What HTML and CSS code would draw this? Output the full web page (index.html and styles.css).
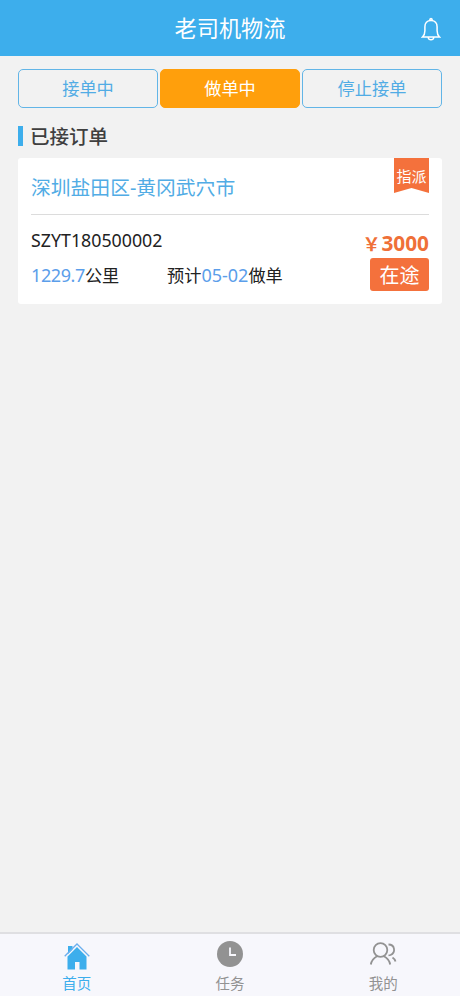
FILE: index.html
```html
<!DOCTYPE html>
<html lang="zh-CN">
<head>
<meta charset="utf-8">
<title>老司机物流</title>
<link rel="stylesheet" href="styles.css">
</head>
<body>
<header class="topbar">
  <h1 class="topbar-title">老司机物流</h1>
  <svg class="bell" viewBox="0 0 20 24"><path d="M1.500 20c1.800-1.600 2.400-3 2.400-6.200V9.800c0-3.500 2.100-6.300 6.100-6.300s6.100 2.800 6.100 6.300v4c0 3.200.6 4.600 2.400 6.200zM8.700 3.500c0-2.600 2.600-2.600 2.600 0M7.200 20.500c.4 3 5.200 3 5.600 0"/></svg>
</header>
<main class="content">
  <nav class="tabs">
    <button class="tab">接单中</button>
    <button class="tab tab-active">做单中</button>
    <button class="tab">停止接单</button>
  </nav>
  <h2 class="section-title"><span>已接订单</span></h2>
  <article class="card">
    <div class="card-head">
      <span class="route">深圳盐田区-黄冈武穴市</span>
      <span class="ribbon">指派</span>
    </div>
    <div class="card-body">
      <div class="details">
        <div class="order-no"><span>SZYT180500002</span></div>
        <div class="facts">
          <span class="distance"><span class="num num-tight">1229.7</span>公里</span>
          <span class="date">预计<span class="num">05-02</span>做单</span>
        </div>
      </div>
      <div class="status">
        <span class="price"><span class="yen">￥</span>3000</span>
        <span class="badge">在途</span>
      </div>
    </div>
  </article>
</main>
<footer class="navbar">
  <a class="nav-item nav-active">
    <svg class="nav-icon" viewBox="0 0 28 28"><path class="solid" d="M4.500 15.500 14 6l9.500 9.500v13h-7v-7.500h-4.500v7.500H4.500zM5 5h4.500v3.500L5 13z"/><path class="roof" d="M1.700 15.300 14 3l12.300 12.300"/></svg>
    <span>首页</span>
  </a>
  <a class="nav-item">
    <svg class="nav-icon" viewBox="0 0 28 28"><circle class="solid" cx="14" cy="13" r="13"/><path class="hands" d="M14 6.500v7.500h6"/></svg>
    <span>任务</span>
  </a>
  <a class="nav-item">
    <svg class="nav-icon" viewBox="0 0 28 28"><g class="line"><circle cx="11.500" cy="9" r="6.800"/><path d="M1.800 23.500C2.500 19.500 4.500 17 8 15.200M15 15.200c3.500 1.800 5.500 4.300 6.200 8.300M19.500 3.500c6.500 0 7.500 8 2 10.500l-2 .5M23.500 16.500c1.500 1 2.500 2 3 4"/></g></svg>
    <span>我的</span>
  </a>
</footer>
</body>
</html>
```
FILE: styles.css
```css
* {
  box-sizing: border-box;
}

body {
  display: flex;
  flex-direction: column;
  height: 996px;
  margin: 0;
  overflow: hidden;
  background: #f2f2f2;
  color: #222;
  font-family: "Noto Sans", "Noto Sans CJK SC", sans-serif;
}

.topbar {
  display: grid;
  grid-template-columns: 1fr auto 1fr;
  align-items: center;
  height: 56px;
  padding: 2px 19px 0;
  background: #3daeec;
  color: #fff;
}

.topbar-title {
  grid-column: 2;
  margin: 0;
  font-size: 22.200px;
  font-weight: 400;
  line-height: 32px;
}

.bell {
  justify-self: end;
  width: 20px;
  height: 24px;
  fill: none;
  stroke: #fff;
  stroke-width: 1.5;
}

.content {
  flex: 1;
  padding: 12.500px 18px 0;
}

.tabs {
  display: flex;
  gap: 2px;
}

.tab {
  flex: 1;
  height: 39.500px;
  padding: 0;
  border: 1.500px solid #62b5e7;
  border-radius: 5px;
  background: transparent;
  color: #51ace5;
  font: 400 17.200px/36px "Noto Sans CJK SC", sans-serif;
}

.tab-active {
  border-color: #ff9f0c;
  background: #ff9f0c;
  color: #fff;
}

.section-title {
  display: flex;
  align-items: center;
  gap: 7px;
  height: 22px;
  margin: 17px 0 11px;
  color: #3f3f3f;
  font-size: 19.500px;
  font-weight: 500;
  line-height: 22px;
}

.section-title::before {
  content: "";
  width: 5px;
  height: 20px;
  background: #3daeec;
}

.section-title span {
  padding-top: 2px;
}

.card {
  height: 146px;
  padding: 0 13px;
  border-radius: 3px;
  background: #fff;
}

.card-head {
  display: flex;
  justify-content: space-between;
  height: 57px;
  border-bottom: 1px solid #dcdcdc;
}

.route {
  color: #51ace5;
  font-size: 19.800px;
  line-height: 60px;
}

.ribbon {
  width: 35px;
  height: 35px;
  background: #f4713c;
  clip-path: polygon(0 0, 100% 0, 100% 100%, 50% 86%, 0 100%);
  color: #fff;
  font-size: 15px;
  line-height: 36px;
  text-align: center;
}

.card-body {
  display: flex;
  justify-content: space-between;
  padding-top: 12px;
}

.order-no {
  height: 30px;
  font-size: 17.800px;
  line-height: 27px;
}

.facts {
  display: flex;
  padding-top: 4px;
  font-size: 17.200px;
  line-height: 28px;
}

.distance {
  width: 136px;
}

.num {
  color: #5b9eea;
  font-size: 18px;
}

.num-tight {
  letter-spacing: -0.4px;
}

.status {
  display: flex;
  flex-direction: column;
  align-items: flex-end;
}

.price {
  height: 31px;
  color: #ef7038;
  font-size: 20.800px;
  font-weight: 700;
  line-height: 32px;
}

.yen {
  margin-right: 1px;
  font-size: 18px;
}

.badge {
  width: 59px;
  height: 33px;
  border-radius: 3px;
  background: #f4713c;
  color: #fff;
  font-size: 20px;
  line-height: 36px;
  text-align: center;
}

.navbar {
  display: flex;
  height: 64px;
  border-top: 2px solid #dfdfe2;
  background: #f7f7fc;
}

.nav-item {
  display: flex;
  flex: 1;
  flex-direction: column;
  align-items: center;
  padding-top: 7px;
  color: #929292;
  font-size: 14.500px;
  line-height: 19px;
}

.nav-active {
  color: #3daeec;
}

.nav-icon {
  width: 28px;
  height: 28px;
  margin-bottom: 5px;
  overflow: visible;
}

.solid {
  fill: currentColor;
}

.roof {
  fill: none;
  stroke: #6aaeee;
  stroke-width: 1.3;
}

.hands {
  fill: none;
  stroke: #f7f7fc;
  stroke-width: 1.8;
}

.line {
  fill: none;
  stroke: currentColor;
  stroke-width: 1.8;
}
```
